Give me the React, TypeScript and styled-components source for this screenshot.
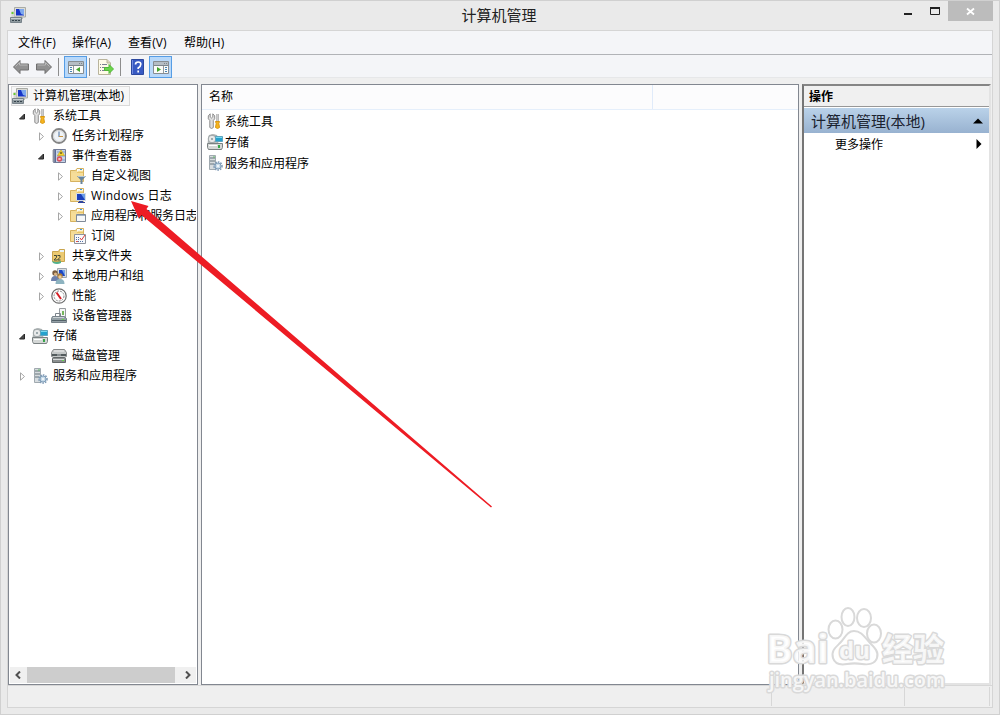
import { ReactNode } from 'react'
import styled, { createGlobalStyle, css } from 'styled-components'

const GlobalStyle = createGlobalStyle`
  * {
    box-sizing: border-box;
  }
  body {
    margin: 0;
    overflow: hidden;
    color: #000;
    font-family: 'Open Sans', 'Noto Sans CJK SC', sans-serif;
    font-size: 12px;
  }
`

const Window = styled.div`
  position: relative;
  display: flex;
  flex-direction: column;
  width: 1000px;
  height: 715px;
  padding: 0 6px 6px;
  border: 1px solid #d0d0d0;
  background: #eaeaea;
`

const TitleBar = styled.header`
  display: grid;
  grid-template-columns: 1fr auto 1fr;
  flex: 0 0 29px;
  height: 29px;
`

const TitleIcon = styled.div`
  padding: 6px 0 0 3px;
`

const Title = styled.h1`
  margin: 0;
  padding-right: 2px;
  font-size: 15px;
  font-weight: 400;
  line-height: 29px;
  color: #222;
`

const WindowButtons = styled.div`
  display: flex;
  justify-content: flex-end;
`

const WindowButton = styled.button<{ $close?: boolean }>`
  width: ${(p) => (p.$close ? 45 : 27)}px;
  height: 20px;
  padding: 0;
  border: 0;
  background: ${(p) => (p.$close ? '#bcbcbc' : 'transparent')};
  svg {
    display: block;
    margin: 0 auto;
  }
`

const Client = styled.div`
  display: flex;
  flex-direction: column;
  flex: 1;
  min-height: 0;
  border: 1px solid #d5d5d5;
  background: #efefef;
`

const MenuBar = styled.nav`
  display: flex;
  flex: 0 0 24px;
  gap: 16px;
  padding-left: 10px;
  border-bottom: 1px solid #b1b3b7;
  background: #f4f5f8;
  line-height: 23px;
  letter-spacing: 0.1px;
`

const MenuItem = styled.span<{ $width: number }>`
  width: ${(p) => p.$width}px;
  white-space: nowrap;
`

const ToolBar = styled.div`
  display: flex;
  align-items: flex-end;
  flex: 0 0 23px;
  padding-left: 1px;
  border-bottom: 1px solid #e6e7e9;
  background: #f4f5f8;
`

const ToolButton = styled.button<{ $active?: boolean; $width?: number }>`
  display: flex;
  align-items: center;
  justify-content: center;
  width: ${(p) => p.$width ?? 23}px;
  height: 22px;
  margin-bottom: -1px;
  padding: 0;
  border: 1px solid ${(p) => (p.$active ? '#569de5' : 'transparent')};
  background: ${(p) => (p.$active ? '#b8d8f9' : 'transparent')};
`

const Separator = styled.i<{ $before?: number; $after?: number }>`
  width: 1px;
  height: 18px;
  margin: 0 ${(p) => p.$after ?? 4}px 1px ${(p) => p.$before ?? 3}px;
  background: #8d8d8d;
`

const Panels = styled.main`
  display: flex;
  flex: 1;
  min-height: 0;
  padding: 6px 1px 0 0;
`

const panel = css`
  display: flex;
  flex-direction: column;
  background: #fff;
  border: 1px solid #828790;
`

const TreePanel = styled.section`
  ${panel}
  width: 190px;
  margin-right: 3px;
`

const ListPanel = styled.section`
  ${panel}
  width: 598px;
  margin-right: 3px;
`

const ActionPanel = styled.section`
  display: flex;
  flex-direction: column;
  flex: 1;
  border: 2px solid;
  border-color: #858585 #e3e3e3 #e3e3e3 #757575;
  background: #fff;
`

const TreeRows = styled.div`
  flex: 1;
  margin-right: 1px;
  padding: 1px 0 0 2px;
  overflow: hidden;
`

const Row = styled.div<{ $level: number }>`
  display: flex;
  align-items: center;
  height: 20px;
  padding-left: ${(p) => p.$level * 19 - 13}px;
  white-space: nowrap;
`

const Expander = styled.span`
  display: flex;
  justify-content: center;
  flex: 0 0 10px;
  margin-right: 5px;
`

const RowLabel = styled.span<{ $spacing?: number }>`
  padding-left: 5px;
  line-height: 18px;
  letter-spacing: ${(p) => p.$spacing ?? 0}px;
`

const RootItem = styled.div`
  display: flex;
  align-items: center;
  width: 119px;
  height: 20px;
  border: 1px solid #dadada;
  background: #f7f7f7;
`

const ScrollBar = styled.div`
  display: flex;
  height: 16px;
  margin: 0 1px 1px;
  background: #f0f0f0;
`

const ScrollButton = styled.span`
  display: flex;
  align-items: center;
  justify-content: center;
  width: 17px;
`

const ScrollThumb = styled.i`
  width: 148px;
  margin-right: 4px;
  background: #cdcdcd;
`

const ListHeader = styled.div`
  display: flex;
  flex: 0 0 25px;
  padding-left: 7px;
  border-bottom: 1px solid #e5effb;
  background: #fcfcfd;
  line-height: 24px;
`

const Column = styled.span`
  width: 444px;
  border-right: 1px solid #e0ebfa;
`

const ListRow = styled.div`
  display: flex;
  align-items: center;
  height: 21px;
  padding-left: 5px;
`

const ListLabel = styled.span`
  padding-left: 2px;
`

const ActionTitle = styled.div`
  height: 21px;
  padding-left: 5px;
  border-bottom: 1px solid #979797;
  background: #f0f0f0;
  font-weight: 700;
  line-height: 21px;
`

const ActionGroup = styled.div`
  display: flex;
  align-items: center;
  justify-content: space-between;
  height: 25px;
  margin-top: 1px;
  padding: 0 6px 0 7px;
  background: linear-gradient(#bad2e9, #98b2d0);
  color: #1b2330;
  font-size: 15px;
`

const ActionItem = styled.div`
  display: flex;
  align-items: center;
  justify-content: space-between;
  height: 22px;
  padding: 0 7px 0 31px;
`

const StatusBar = styled.footer`
  display: flex;
  justify-content: flex-end;
  flex: 0 0 22px;
  padding: 1px 2px 1px 0;
  border-top: 1px solid #d7d7d7;
`

const StatusCell = styled.span<{ $width: number }>`
  width: ${(p) => p.$width}px;
  border-right: 1px solid #d7d7d7;
`

const Overlay = styled.svg`
  position: absolute;
  inset: -1px auto auto -1px;
  pointer-events: none;
`

const IconSvg = styled.svg`
  flex-shrink: 0;
`

const Icon = ({ children, width = 16 }: { children: ReactNode; width?: number }) => (
  <IconSvg width={width} height='16' viewBox={`0 0 ${width} 16`}>
    {children}
  </IconSvg>
)

const Folder = () => (
  <>
    <path d='M.5 2.500h5l1.500-2h6.500v13H.5z' fill='#e9c66c' stroke='#d6b260' />
    <path d='M7 1h6v2H7z' fill='#f8fafc' />
    <path d='M10 1h2v1h-2z' fill='#479bd4' />
    <path d='M1 5h12v8H1z' fill='#f6dd98' />
    <path d='M1 4h6l1-1h5' fill='none' stroke='#fbeec0' />
  </>
)

const ComputerIcon = () => (
  <Icon>
    <path d='M4.500 .5h11v9.500h-11z' fill='#dcdcd6' stroke='#a9aba5' />
    <path d='M6 2h8v6.500H6z' fill='#1735c8' />
    <path d='M9 2h5v6L11 7z' fill='#7fa9ee' />
    <path d='M8 10h5v2H8z' fill='#babcb6' />
    <path d='M1.500 4h3v6h-3z' fill='#d5d7d3' />
    <path d='M1.500 5h2v2h-2z' fill='#69ca32' />
    <path d='M.5 10.500h11v5H.5z' fill='#8f9a9f' stroke='#78838a' />
    <path d='M1 11.500h10' stroke='#c7cfd2' />
    <path d='M2 13.500h2M5 13.500h2M8 13.500h2' stroke='#35434c' />
  </Icon>
)

const ToolsIcon = () => (
  <Icon>
    <path
      d='M3.200 .8v3L4.500 5l1.300-1.200v-3l1.900 2v3L6.300 7.500v7l-1.700 1-1.800-1v-7L1.300 5.800v-3z'
      fill='#dedede'
      stroke='#858585'
      strokeWidth='.9'
    />
    <path d='M10.500 1v7.500' stroke='#8b8b8b' strokeWidth='2.200' />
    <path d='M10.300 1v7' stroke='#ddd' />
    <path d='M8.500 8.500h4l-.7 2 .7 4-2 1-2-1 .7-4z' fill='#f7b51d' stroke='#d79613' />
  </Icon>
)

const ClockIcon = () => (
  <Icon>
    <circle cx='8' cy='8' r='7' fill='#eff3f7' stroke='#858585' strokeWidth='1.800' />
    <circle cx='8' cy='8' r='5.500' fill='none' stroke='#d3d5d6' />
    <path d='M8 3.500V9' fill='none' stroke='#4a6f9c' />
    <path d='M8 8.500h4' stroke='#c89443' />
  </Icon>
)

const EventIcon = () => (
  <Icon>
    <path d='M2.500 1.500h12v13h-12z' fill='#c9d5e8' stroke='#727b95' />
    <path d='M3 2h2v12H3z' fill='#5b6a96' />
    <path d='M1 3h3M1 5h3M1 7h3M1 9h3M1 11h3M1 13h3' stroke='#a1a6b0' />
    <path d='M6 4h8M6 8h8M6 12h8' stroke='#829cc6' />
    <path d='M10 2l3.500 5.500h-7z' fill='#f7d328' stroke='#c8a719' strokeWidth='.600' />
    <path d='M10 4v2' stroke='#222' />
    <circle cx='8.500' cy='11' r='2.700' fill='#d9505a' />
    <path d='M7.500 10l2 2m0-2l-2 2' stroke='#fff' strokeWidth='.800' />
  </Icon>
)

const FilterFolderIcon = () => (
  <Icon>
    <Folder />
    <path d='M7 8h9l-3.500 4v4h-2v-4z' fill='#68849e' />
    <path d='M8 8.500h7' stroke='#b4c7d8' />
  </Icon>
)

const WindowsFolderIcon = () => (
  <Icon>
    <Folder />
    <path d='M6.500 5.500h9v7h-9z' fill='#1b3fbb' stroke='#d6dde7' />
    <path d='M11 6h4v6z' fill='#6d9de7' />
    <path d='M9 13h4v1h2v1H8v-1h1z' fill='#30459c' />
  </Icon>
)

const AppFolderIcon = () => (
  <Icon>
    <Folder />
    <path d='M6.500 6.500h9v7h-9z' fill='#f6f8fa' stroke='#7f8a98' />
    <path d='M7 7.500h8' stroke='#9fafc0' />
  </Icon>
)

const SubscribeIcon = () => (
  <Icon>
    <Folder />
    <path d='M4.500 6.500h11v9h-11z' fill='#f8f9fb' stroke='#8e939c' />
    <path d='M6 9.500h4M6 11.500h4M8 13.500h5' stroke='#5472a6' strokeDasharray='1 1' />
    <path d='M10 10l1.500 2L15 7' fill='none' stroke='#dc3b3b' />
    <path d='M6 13.500h2' stroke='#df5349' />
  </Icon>
)

const ShareIcon = () => (
  <Icon>
    <path d='M1.500 3.500h6l1-2h5v12h-12z' fill='#ecca71' stroke='#c9a54f' />
    <path d='M9 2h4v2H9z' fill='#e9f2f6' />
    <path d='M3 7.500h2.500v1.800L3 12h3M6.500 7.500H9v1.800L6.500 12h3' fill='none' stroke='#414936' />
    <path d='M1 13q4 2 9 0v2q-4 2-8 0z' fill='#52b18b' />
  </Icon>
)

const UsersIcon = () => (
  <Icon>
    <path d='M6.500 .5h9v9h-9z' fill='#d7dce0' stroke='#a1a8af' />
    <path d='M8 2h6v6H8z' fill='#1d46c5' />
    <path d='M11 2h3v6z' fill='#77a5e8' />
    <circle cx='4' cy='5' r='2.700' fill='#795c40' />
    <circle cx='4.500' cy='6' r='1.500' fill='#dfb786' />
    <path d='M0 13q0-5 4-5t5 5z' fill='#6d7fab' />
    <circle cx='9' cy='8' r='2.700' fill='#a87a3c' />
    <circle cx='9' cy='9' r='1.700' fill='#eecc99' />
    <path d='M4.500 16q0-5 4.500-5t4.500 5z' fill='#8db3c0' />
  </Icon>
)

const GaugeIcon = () => (
  <Icon>
    <circle cx='8' cy='8' r='7.200' fill='#fff' stroke='#6e6e6e' strokeWidth='1.200' />
    <circle cx='8' cy='8' r='5' fill='none' stroke='#8a8a8a' strokeDasharray='2 1' />
    <path d='M5.500 4.500l4.500 6.500' stroke='#d51e25' strokeWidth='2' />
  </Icon>
)

const DeviceIcon = () => (
  <Icon>
    <path d='M8.500 .5h6v9h-6z' fill='#f5f6f6' stroke='#979b9f' />
    <path d='M11 3h2v4h-2z' fill='#77b65d' />
    <path d='M4.500 8V5.500h5V8' fill='none' stroke='#7d858c' />
    <path d='M1.500 8.500h12l2 2v4H.5v-4z' fill='#94a0a6' stroke='#77828a' />
    <path d='M2 9.500h11' stroke='#cbd1d4' />
    <path d='M1 12.500h14' stroke='#536169' />
    <path d='M11 11h2v1h-2z' fill='#65d74e' />
  </Icon>
)

const StorageIcon = () => (
  <Icon>
    <path d='M2 1.500q4-2 8 0l1 8H1z' fill='#b9bfc0' stroke='#90999b' strokeWidth='.600' />
    <circle cx='5' cy='5' r='3.800' fill='#e7e9e9' stroke='#9ca3a5' />
    <circle cx='5' cy='5' r='1' fill='#849398' />
    <path d='M8.500 2.500h7v5h-7z' fill='#25a2ce' stroke='#5fa5bf' />
    <path d='M9 3.500h6' stroke='#79d9ef' />
    <path d='M.5 9.500h15v4l-1 2h-13l-1-2z' fill='#d4d7d6' stroke='#7a8182' />
    <path d='M2 11h8v1H2z' fill='#fff' />
    <path d='M11 11h2v3h-2z' fill='#38a64a' />
  </Icon>
)

const DiskIcon = () => (
  <Icon>
    <path d='M2.500 1.500h11l2 3v4l-2 1h-11l-2-1v-4z' fill='#c5c8c8' stroke='#868989' />
    <path d='M3 3h10' stroke='#efefef' />
    <path d='M1 6h14v2H1z' fill='#535b5d' />
    <path d='M6 7h4' stroke='#bfc4c5' />
    <path d='M2.500 9.500h11l1 1v4h-13v-4z' fill='#8b8f90' stroke='#626768' />
    <path d='M2 11.500h11' stroke='#d7dada' />
    <path d='M11 12h2v1h-2z' fill='#63d24b' />
  </Icon>
)

const ServicesIcon = () => (
  <Icon>
    <path d='M2.500 .5h6v14h-6z' fill='#d7dcdf' stroke='#a0a9af' />
    <path d='M3 3h5M3 6h5M3 9h4' stroke='#67747c' />
    <path d='M7 1v2' stroke='#61bb65' />
    <circle cx='11' cy='11' r='4' fill='none' stroke='#7f9ab5' strokeWidth='1.600' strokeDasharray='1.600 1' />
    <circle cx='11' cy='11' r='3' fill='#c8dbe9' stroke='#809fbb' />
    <circle cx='11' cy='11' r='1.100' fill='#f8fafc' />
  </Icon>
)

const NavArrow = ({ forward }: { forward?: boolean }) => (
  <svg width='18' height='16' viewBox='0 0 18 16'>
    <g transform={forward ? 'matrix(-1 0 0 1 18 0)' : undefined}>
      <path d='M1.500 8L8 1.500V5h8.500v6H8v3.500z' fill='#919191' stroke='#6f6f6f' />
      <path d='M3.500 7.500L7.500 3.500V6h8' fill='none' stroke='#b9b9b9' />
    </g>
  </svg>
)

const PaneIcon = ({ right }: { right?: boolean }) => (
  <Icon>
    <path d='M.5 2.500h15v12H.5z' fill='#fbfbf8' stroke='#878d92' />
    <path d='M1 3h14v3H1z' fill='#b5bdc4' />
    <path d='M1 6.500h14M11 4.500h1M13 4.500h1' stroke='#7c858c' />
    <path d={right ? 'M10.500 7v7' : 'M5.500 7v7'} stroke='#92999f' />
    <path d={right ? 'M12 8.500h2m-2 2h2m-2 2h2' : 'M2 8.500h2m-2 2h2m-2 2h2'} stroke='#4684b5' />
    <path d={right ? 'M4 8v5l4-2.500z' : 'M12 8v5L8 10.500z'} fill='#42a52b' />
  </Icon>
)

const ExportIcon = () => (
  <Icon>
    <path d='M.5 .5h8.500l3.500 3.500v11.500H.5z' fill='#fffbe8' stroke='#b9b49c' />
    <path d='M9 .5V4h3.500' fill='#ddd6bd' stroke='#b9b49c' />
    <path d='M2 5.500h1m1 0h5M2 8.500h1m1 0h4M2 11.500h1m1 0h4' stroke='#7b7f91' />
    <path d='M6.500 8.500h4.500v-3l4.500 4.500-4.500 4.500v-3H6.500z' fill='#6bd44b' stroke='#50b938' />
  </Icon>
)

const HelpIcon = () => (
  <Icon width={13}>
    <path d='M.5 .5h12v15H.5z' fill='#385ac3' stroke='#2c489f' />
    <path d='M1.500 1v14' stroke='#718be0' />
    <path d='M4.500 5.500q0-2.500 2.700-2.500t2.600 2.300T7.200 9v1M7.200 11.500v2' fill='none' stroke='#fff' strokeWidth='1.700' />
  </Icon>
)

const Triangle = ({ open }: { open?: boolean }) => (
  <svg width='9' height='9' viewBox='0 0 9 9'>
    {open ? (
      <path d='M6.500 2v5h-5z' fill='#4a4a4a' stroke='#262626' />
    ) : (
      <path d='M2.500 .8v7.400l4-3.700z' fill='#fff' stroke='#a6a6a6' />
    )}
  </svg>
)

const Chevron = ({ right }: { right?: boolean }) => (
  <svg width='9' height='8' viewBox='0 0 9 8'>
    <path d={right ? 'M3 .5L6.500 4 3 7.500' : 'M6 .5L2.500 4 6 7.500'} fill='none' stroke='#505050' strokeWidth='2' />
  </svg>
)

type TreeNode = { label: string; level: number; icon: ReactNode; state?: 'open' | 'closed'; spacing?: number }

const tree: TreeNode[] = [
  { label: '系统工具', level: 1, icon: <ToolsIcon />, state: 'open' },
  { label: '任务计划程序', level: 2, icon: <ClockIcon />, state: 'closed' },
  { label: '事件查看器', level: 2, icon: <EventIcon />, state: 'open' },
  { label: '自定义视图', level: 3, icon: <FilterFolderIcon />, state: 'closed' },
  { label: 'Windows 日志', level: 3, icon: <WindowsFolderIcon />, state: 'closed', spacing: 0.3 },
  { label: '应用程序和服务日志', level: 3, icon: <AppFolderIcon />, state: 'closed', spacing: -0.15 },
  { label: '订阅', level: 3, icon: <SubscribeIcon /> },
  { label: '共享文件夹', level: 2, icon: <ShareIcon />, state: 'closed' },
  { label: '本地用户和组', level: 2, icon: <UsersIcon />, state: 'closed' },
  { label: '性能', level: 2, icon: <GaugeIcon />, state: 'closed' },
  { label: '设备管理器', level: 2, icon: <DeviceIcon /> },
  { label: '存储', level: 1, icon: <StorageIcon />, state: 'open' },
  { label: '磁盘管理', level: 2, icon: <DiskIcon /> },
  { label: '服务和应用程序', level: 1, icon: <ServicesIcon />, state: 'closed' },
]

const listItems = [
  { label: '系统工具', icon: <ToolsIcon /> },
  { label: '存储', icon: <StorageIcon /> },
  { label: '服务和应用程序', icon: <ServicesIcon /> },
]

const menus = [
  { label: '文件(F)', width: 38 },
  { label: '操作(A)', width: 40 },
  { label: '查看(V)', width: 40 },
  { label: '帮助(H)', width: 42 },
]

const WatermarkGroup = styled.g`
  fill: #fff;
  fill-opacity: 0.8;
  stroke: #d9d9d9;
  stroke-width: 2px;
  font-weight: 700;
  text {
    paint-order: stroke;
    stroke-width: 3px;
    stroke-linejoin: round;
  }
`

const Watermark = () => (
  <WatermarkGroup>
    <ellipse cx='835.500' cy='629.500' rx='7' ry='9' />
    <ellipse cx='848' cy='617' rx='6.500' ry='9' />
    <ellipse cx='864' cy='618' rx='7' ry='9' />
    <ellipse cx='874' cy='633.500' rx='7' ry='9' />
    <path d='M854 631c-7 0-9 7-14 12s-9 8-7 15 8 7 14 6 9-1 15 0 13 0 15-6-2-10-7-15-8-12-16-12z' />
    <text x='766' y='663' fontSize='39' textLength='63' lengthAdjust='spacingAndGlyphs'>
      Bai
    </text>
    <text x='839' y='659' fontSize='24' textLength='31' lengthAdjust='spacingAndGlyphs'>
      du
    </text>
    <text x='882' y='661' fontSize='32' textLength='62' lengthAdjust='spacingAndGlyphs'>
      经验
    </text>
    <text x='769' y='687' fontSize='20' fontWeight='600' textLength='176' lengthAdjust='spacingAndGlyphs'>
      jingyan.baidu.com
    </text>
  </WatermarkGroup>
)

export default function App() {
  return (
    <Window>
      <GlobalStyle />
      <TitleBar>
        <TitleIcon>
          <ComputerIcon />
        </TitleIcon>
        <Title>计算机管理</Title>
        <WindowButtons>
          <WindowButton aria-label='最小化'>
            <svg width='10' height='20'>
              <path d='M1 12h8v2H1z' fill='#222' />
            </svg>
          </WindowButton>
          <WindowButton aria-label='最大化'>
            <svg width='10' height='20'>
              <path d='M.5 6v7.500h9V6' fill='none' stroke='#222' />
              <path d='M0 6h10v2H0z' fill='#222' />
            </svg>
          </WindowButton>
          <WindowButton $close aria-label='关闭'>
            <svg width='9' height='20'>
              <path d='M1 7.500l7 6M8 7.500l-7 6' stroke='#fff' strokeWidth='1.800' />
            </svg>
          </WindowButton>
        </WindowButtons>
      </TitleBar>
      <Client>
        <MenuBar>
          {menus.map((menu) => (
            <MenuItem key={menu.label} $width={menu.width}>
              {menu.label}
            </MenuItem>
          ))}
        </MenuBar>
        <ToolBar>
          <ToolButton>
            <NavArrow />
          </ToolButton>
          <ToolButton>
            <NavArrow forward />
          </ToolButton>
          <Separator $after={5} />
          <ToolButton $active>
            <PaneIcon />
          </ToolButton>
          <Separator $before={2} />
          <ToolButton>
            <ExportIcon />
          </ToolButton>
          <Separator />
          <ToolButton $width={24}>
            <HelpIcon />
          </ToolButton>
          <ToolButton $active>
            <PaneIcon right />
          </ToolButton>
        </ToolBar>
        <Panels>
          <TreePanel>
            <TreeRows>
              <RootItem>
                <ComputerIcon />
                <RowLabel>计算机管理(本地)</RowLabel>
              </RootItem>
              {tree.map((node) => (
                <Row key={node.label} $level={node.level}>
                  <Expander>{node.state && <Triangle open={node.state === 'open'} />}</Expander>
                  {node.icon}
                  <RowLabel $spacing={node.spacing}>{node.label}</RowLabel>
                </Row>
              ))}
            </TreeRows>
            <ScrollBar>
              <ScrollButton>
                <Chevron />
              </ScrollButton>
              <ScrollThumb />
              <ScrollButton>
                <Chevron right />
              </ScrollButton>
            </ScrollBar>
          </TreePanel>
          <ListPanel>
            <ListHeader>
              <Column>名称</Column>
            </ListHeader>
            {listItems.map((item) => (
              <ListRow key={item.label}>
                {item.icon}
                <ListLabel>{item.label}</ListLabel>
              </ListRow>
            ))}
          </ListPanel>
          <ActionPanel>
            <ActionTitle>操作</ActionTitle>
            <ActionGroup>
              计算机管理(本地)
              <svg width='10' height='6'>
                <path d='M0 5.500L5 .5l5 5z' />
              </svg>
            </ActionGroup>
            <ActionItem>
              更多操作
              <svg width='6' height='10'>
                <path d='M.5 0l5 5-5 5z' />
              </svg>
            </ActionItem>
          </ActionPanel>
        </Panels>
        <StatusBar>
          <StatusCell $width={133} />
          <StatusCell $width={133} />
          <StatusCell $width={85} />
        </StatusBar>
      </Client>
      <Overlay width='1000' height='715'>
        <Watermark />
        <path d='M131 201l7.500 17 3-3L491 507.500l1-1L146.500 209l2-3z' fill='#ed1c24' />
      </Overlay>
    </Window>
  )
}
